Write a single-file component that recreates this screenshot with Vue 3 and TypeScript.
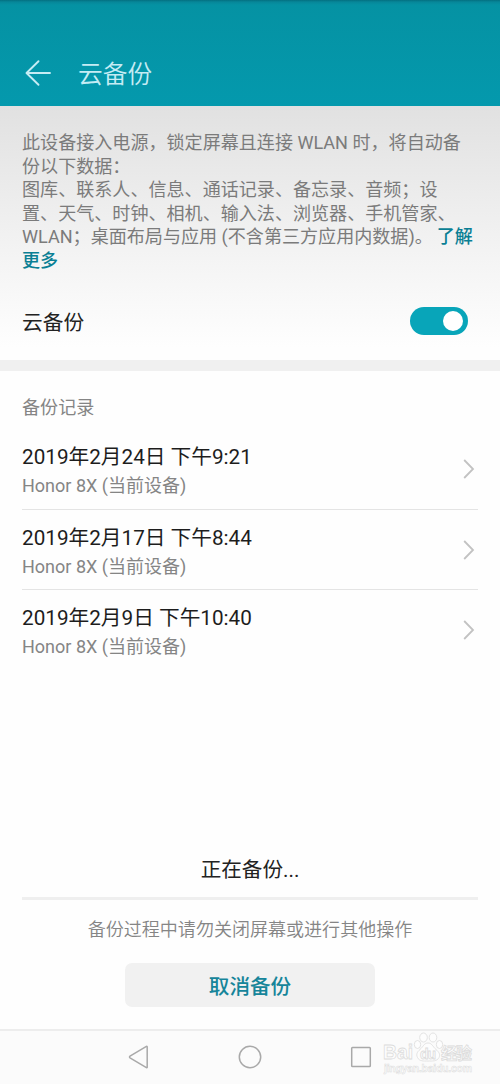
<script setup lang="ts">
import { ref } from 'vue'

interface BackupRecord {
  time: string
  device: string
}

const enabled = ref(true)

const introLines: string[] = [
  '此设备接入电源，锁定屏幕且连接 WLAN 时，将自动备',
  '份以下数据：',
  '图库、联系人、信息、通话记录、备忘录、音频；设',
  '置、天气、时钟、相机、输入法、浏览器、手机管家、',
]

const records: BackupRecord[] = [
  { time: '2019年2月24日 下午9:21', device: 'Honor 8X (当前设备)' },
  { time: '2019年2月17日 下午8:44', device: 'Honor 8X (当前设备)' },
  { time: '2019年2月9日 下午10:40', device: 'Honor 8X (当前设备)' },
]
</script>

<template>
  <div class="screen">
    <header class="header">
      <svg class="back" width="28" height="28" viewBox="0 0 28 28">
        <path d="M14.5 2.2 2.5 14l12 11.800M2.800 14H26" />
      </svg>
      <h1 class="title">云备份</h1>
    </header>

    <section class="intro">
      <div class="desc">
        <div v-for="line in introLines" :key="line">{{ line }}</div>
        <div>WLAN；桌面布局与应用 (不含第三方应用内数据)。<b class="link gap">了解</b></div>
        <div><b class="link">更多</b></div>
      </div>
      <div class="toggle-row">
        <span>云备份</span>
        <button class="switch" :class="{ on: enabled }" @click="enabled = !enabled">
          <i class="knob"></i>
        </button>
      </div>
    </section>

    <main class="content">
      <h2 class="section-title">备份记录</h2>
      <ul class="list">
        <li v-for="r in records" :key="r.time" class="row">
          <div>
            <div class="time">{{ r.time }}</div>
            <div class="device">{{ r.device }}</div>
          </div>
          <svg class="chevron" width="12" height="20" viewBox="0 0 12 20">
            <path d="M1.2 1 10 10l-8.800 9" />
          </svg>
        </li>
      </ul>
    </main>

    <footer class="progress">
      <div class="status">正在备份...</div>
      <div class="bar"></div>
      <p class="hint">备份过程中请勿关闭屏幕或进行其他操作</p>
      <button class="cancel">取消备份</button>
    </footer>

    <nav class="nav">
      <svg width="24" height="26" viewBox="0 0 24 26">
        <path d="M20.200 2.800v20.400q0 .8-.8.4L3 13.800q-1-.8 0-1.600L19.400 2.400q.8-.4.8.4Z" />
      </svg>
      <svg width="24" height="26" viewBox="0 0 24 26"><circle cx="12" cy="13" r="10.700" /></svg>
      <svg width="24" height="26" viewBox="0 0 24 26">
        <rect x="2.700" y="3.500" width="18.600" height="19" rx="0.8" />
      </svg>
      <svg class="watermark" width="100" height="50" viewBox="0 0 100 50">
        <text x="3" y="30" font-size="21" textLength="30" lengthAdjust="spacingAndGlyphs">Bai</text>
        <ellipse cx="37.500" cy="15.500" rx="3.200" ry="4" />
        <ellipse cx="43.500" cy="8.500" rx="3.800" ry="4.500" />
        <ellipse cx="53" cy="8.500" rx="3.800" ry="4.500" />
        <ellipse cx="59.500" cy="15.500" rx="3.200" ry="4" />
        <path d="M48 14c-4 0-5 4-8 6.500-3 2.500-4 5-2.500 8 2 4 6 3.500 10.500 3.500s9 .5 11-3.500c1.500-3 0-5.500-3-8-3-2.500-4-6.500-8-6.500Z" />
        <text x="40" y="30" font-size="14" textLength="16">du</text>
        <text x="61" y="30" font-size="16" textLength="31">经验</text>
        <text class="url" x="4" y="43" font-size="10.500" textLength="88">jingyan.baidu.com</text>
      </svg>
    </nav>
  </div>
</template>

<style>
body {
  margin: 0;
}
</style>

<style scoped>
.screen {
  width: 500px;
  height: 1084px;
  display: flex;
  flex-direction: column;
  overflow: hidden;
  background: #fefefe;
  color: #222;
  font-family: Roboto, 'Noto Sans CJK SC', sans-serif;
}
.header {
  box-sizing: border-box;
  height: 106px;
  flex: none;
  display: flex;
  align-items: center;
  padding: 41px 24px 0;
  background: linear-gradient(#047080 0, #078799 2px, #0592a3 5px, #0499ad 100%);
}
.back {
  margin-top: -2px;
  fill: none;
  stroke: #c5ecf4;
  stroke-width: 1.9;
  stroke-linecap: round;
  stroke-linejoin: round;
}
.title {
  margin: 3px 0 0 26px;
  font-size: 24.7px;
  line-height: 36px;
  font-weight: 350;
  color: #c5ecf4;
}
.intro {
  box-sizing: border-box;
  height: 254px;
  flex: none;
  padding: 25px 22px 0;
  background: linear-gradient(#e1e1e1, #f4f4f4 60%, #fefefe 95%);
}
.desc {
  font-size: 18.07px;
  line-height: 23.6px;
  color: #7b7b7b;
  white-space: nowrap;
}
.link {
  color: #0a7f94;
  font-weight: 500;
}
.gap {
  margin-left: 4px;
}
.toggle-row {
  display: flex;
  align-items: center;
  justify-content: space-between;
  height: 28px;
  margin-top: 34px;
  padding-right: 10px;
  font-size: 20.7px;
}
.switch {
  width: 58px;
  height: 28px;
  padding: 4px;
  border: 0;
  border-radius: 14px;
  display: flex;
  background: #bbb;
}
.switch.on {
  justify-content: flex-end;
  padding-right: 5px;
  background: #08a5b9;
}
.knob {
  width: 20px;
  height: 20px;
  border-radius: 50%;
  background: #fff;
}
.content {
  flex: 1;
  padding: 24px 22px 0;
  border-top: 11px solid #f0f0f0;
}
.section-title {
  margin: 0;
  font-size: 18.1px;
  line-height: 26px;
  font-weight: 400;
  color: #858585;
}
.list {
  list-style: none;
  margin: 8px 0 0;
  padding: 0;
}
.row {
  box-sizing: border-box;
  height: 80.5px;
  display: flex;
  align-items: center;
  justify-content: space-between;
  padding: 5px 3px 0 0;
  border-bottom: 1px solid #e4e4e4;
}
.row:last-child {
  border-color: transparent;
}
.time {
  font-size: 20.7px;
  line-height: 30px;
  color: #1d1d1d;
}
.device {
  font-size: 18px;
  line-height: 28px;
  color: #858585;
}
.chevron {
  margin-top: -4px;
  fill: none;
  stroke: #c2c2c2;
  stroke-width: 1.8;
}
.progress {
  display: flex;
  flex-direction: column;
  align-items: center;
  height: 174px;
  flex: none;
  padding: 0 22px;
}
.status {
  font-size: 20.6px;
  line-height: 30px;
}
.bar {
  width: 100%;
  height: 3px;
  margin-top: 12px;
  background: #efefef;
}
.hint {
  margin: 17px 0 0;
  font-size: 18.05px;
  line-height: 26px;
  color: #858585;
  font-weight: 350;
}
.cancel {
  width: 250px;
  height: 44px;
  margin-top: 20px;
  padding: 0;
  border: 0;
  border-radius: 7px;
  background: #f1f1f1;
  color: #16859a;
  font: 500 20.6px Roboto, 'Noto Sans CJK SC', sans-serif;
}
.nav {
  box-sizing: border-box;
  position: relative;
  height: 55px;
  flex: none;
  display: flex;
  align-items: center;
  justify-content: center;
  gap: 87px;
  padding-bottom: 2px;
  border-top: 2px solid #ededed;
  background: #fbfbfb;
  fill: none;
  stroke: #a9a9a9;
  stroke-width: 1.5;
}
.watermark {
  position: absolute;
  left: 380px;
  top: -2px;
  fill: #fdfdfd;
  stroke: #dcdcdc;
  stroke-width: 0.8;
  font-family: 'Liberation Sans', 'Noto Sans CJK SC', sans-serif;
  font-weight: 700;
}
.url {
  stroke-width: 0.5;
}
</style>
